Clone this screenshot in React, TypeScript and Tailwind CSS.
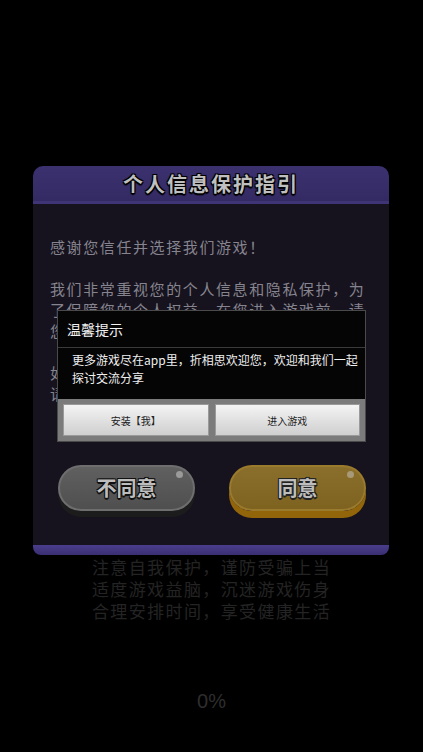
import { FC } from "react";

const cjk = "font-['Noto_Sans_CJK_SC','Noto_Sans',sans-serif]";

const PanelText: FC = () => {
  const lines = [
    "感谢您信任并选择我们游戏！",
    "",
    "我们非常重视您的个人信息和隐私保护，为",
    "了保障您的个人权益，在您进入游戏前，请",
    "您务必阅读《用户协议》和《隐私政策》",
    "",
    "如您已阅读并同意以上协议全部内容，",
    "请点击“同意”开始使用我们的服务。",
  ];
  return (
    <div className="flex flex-col text-[15px] leading-[21px] tracking-[1.6px] text-[#86848f]">
      {lines.map((l, i) => (
        <div key={i} className="h-[21px] whitespace-nowrap">
          {l}
        </div>
      ))}
    </div>
  );
};

const Notice: FC = () => {
  return (
    <div className="absolute left-[57px] top-[310px] w-[309px] flex flex-col bg-[#050505] border border-[#4a4a4a]">
      <div className="h-[37px] flex items-center pl-[9px] text-[14px] text-[#f2f2f2] border-b border-[#3a3a3a]">
        温馨提示
      </div>
      <div className="h-[51px] pl-[14px] pt-[3px] text-[12px] leading-[18px] text-[#f0f0f0]">
        更多游戏尽在app里，折相思欢迎您，欢迎和我们一起
        <br />
        探讨交流分享
      </div>
      <div className="h-[42px] bg-[#7b7b7b] flex items-center gap-[6px] px-[5px]">
        <button className="flex-1 h-[32px] bg-gradient-to-b from-[#f4f4f4] to-[#cfcfcf] border border-[#9a9a9a] text-[10px] text-[#222]">
          安装【我】
        </button>
        <button className="flex-1 h-[32px] bg-gradient-to-b from-[#f4f4f4] to-[#cfcfcf] border border-[#9a9a9a] text-[10px] text-[#222]">
          进入游戏
        </button>
      </div>
    </div>
  );
};

export default function App() {
  return (
    <div className={`relative w-[423px] h-[752px] bg-black overflow-hidden ${cjk}`}>
      <div className="pt-[166px] px-[33px]">
        <div className="w-[356px] flex flex-col">
          <div className="h-[38px] rounded-t-[10px] bg-gradient-to-b from-[#3b316f] to-[#342a63] border-b-[3px] border-[#3f3475] flex items-center justify-center">
            <span className="text-[20px] font-bold tracking-[2px] text-[#bfbfbf] [text-shadow:0_0_2px_#000,1px_1px_0_#000,-1px_-1px_0_#000,1px_-1px_0_#000,-1px_1px_0_#000,0_2px_1px_#000]">
              个人信息保护指引
            </span>
          </div>
          <div className="bg-[#16131e] pl-[17px] pt-[32px] h-[341px]">
            <PanelText />
            <div className="mt-[61px] flex gap-[34px] pl-[8px]">
              <button className="relative w-[137px] h-[46px] rounded-full bg-gradient-to-b from-[#606060] to-[#4f4f4f] border-2 border-[#6e6e6e] shadow-[0_6px_0_#1c1c1c] flex items-center justify-center">
                <span className="text-[20px] font-bold text-[#bdbdbd] [text-shadow:1px_1px_0_#111,-1px_-1px_0_#111,1px_-1px_0_#111,-1px_1px_0_#111,0_2px_0_#111]">
                  不同意
                </span>
                <span className="absolute right-[10px] top-[4px] w-[7px] h-[7px] rounded-full bg-[#9a9a9a]" />
              </button>
              <button className="relative w-[137px] h-[46px] rounded-full bg-gradient-to-b from-[#8a6f2c] to-[#7e621f] border-2 border-[#9a7a2c] shadow-[0_7px_0_#93650a] flex items-center justify-center">
                <span className="text-[20px] font-bold text-[#bdbdbd] [text-shadow:1px_1px_0_#222,-1px_-1px_0_#222,1px_-1px_0_#222,-1px_1px_0_#222,0_2px_0_#222]">
                  同意
                </span>
                <span className="absolute right-[10px] top-[4px] w-[7px] h-[7px] rounded-full bg-[#a89a78]" />
              </button>
            </div>
          </div>
          <div className="h-[10px] rounded-b-[8px] bg-gradient-to-b from-[#4a3d8c] to-[#3a2f72]" />
        </div>
      </div>

      <div className="mt-[1px] flex flex-col items-center text-[17px] leading-[22px] tracking-[1.4px] text-[#242424]">
        <div>注意自我保护，谨防受骗上当</div>
        <div>适度游戏益脑，沉迷游戏伤身</div>
        <div>合理安排时间，享受健康生活</div>
      </div>

      <div className="mt-[64px] text-center text-[20px] text-[#2e2e2e] font-['Liberation_Sans',sans-serif]">
        0%
      </div>

      <Notice />
    </div>
  );
}
